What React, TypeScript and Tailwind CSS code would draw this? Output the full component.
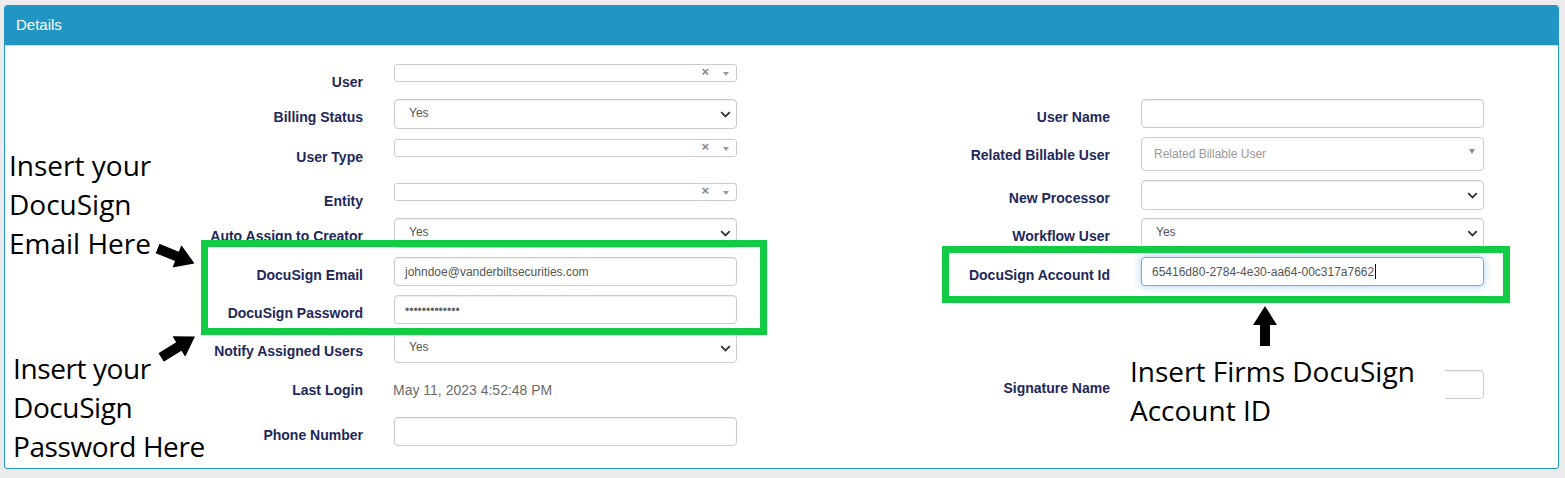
const labelCls =
  "text-right text-[14px] font-bold leading-5 pt-[8px] text-[#22275a] whitespace-nowrap";

function Chevron() {
  return (
    <svg width="11" height="7" viewBox="0 0 11 7" className="shrink-0">
      <path d="M1.2 1.2l4.3 4.3 4.3-4.3" fill="none" stroke="#333" strokeWidth="1.8" />
    </svg>
  );
}

function Select2Small() {
  return (
    <div className="relative h-[18px] border border-[#ccc] rounded-[3px] bg-white">
      <span className="absolute right-[27px] top-[-1px] text-[13px] font-bold text-[#888] leading-4">×</span>
      <span className="absolute right-[7px] top-[7px] w-0 h-0 border-l-[3px] border-r-[3px] border-t-[4px] border-l-transparent border-r-transparent border-t-[#999]" />
    </div>
  );
}

function SelectBox({ value }: { value?: string }) {
  return (
    <div className="h-[30px] border border-[#ccc] rounded-[4px] bg-white flex items-center justify-between pl-[14px] pr-[5px] shadow-[inset_0_1px_1px_rgba(0,0,0,0.075)]">
      <span className="text-[12px] text-[#555] -mt-[2px]">{value ?? ""}</span>
      <Chevron />
    </div>
  );
}

function TextInput({ value, focused, password }: { value?: string; focused?: boolean; password?: boolean }) {
  return (
    <div
      className={
        focused
          ? "h-[29px] border border-[#66afe9] rounded-[4px] bg-white flex items-center pl-[10px] shadow-[0_0_8px_rgba(102,175,233,0.6)]"
          : "h-[29px] border border-[#ccc] rounded-[4px] bg-white flex items-center pl-[10px] shadow-[inset_0_1px_1px_rgba(0,0,0,0.075)]"
      }
    >
      <span className={password ? "text-[12px] text-[#666] tracking-[0px]" : "text-[12px] text-[#555]"}>
        {value ?? ""}
      </span>
      {focused && <span className="w-px h-[15px] bg-black ml-px" />}
    </div>
  );
}

function RelatedSelect() {
  return (
    <div className="relative h-[34px] border border-[#ccc] rounded-[4px] bg-white flex items-center pl-[12px]">
      <span className="text-[12px] text-[#999]">Related Billable User</span>
      <span className="absolute right-[8px] top-[11px] w-0 h-0 border-l-[3px] border-r-[3px] border-t-[5px] border-l-transparent border-r-transparent border-t-[#888]" />
    </div>
  );
}

type Row = { label: string; h: string; control: React.ReactNode };

const leftRows: Row[] = [
  { label: "User", h: "h-[35px]", control: <Select2Small /> },
  { label: "Billing Status", h: "h-[40px]", control: <SelectBox value="Yes" /> },
  { label: "User Type", h: "h-[44px]", control: <Select2Small /> },
  { label: "Entity", h: "h-[35px]", control: <Select2Small /> },
  { label: "Auto Assign to Creator", h: "h-[39px]", control: <SelectBox value="Yes" /> },
  { label: "DocuSign Email", h: "h-[38px]", control: <TextInput value="johndoe@vanderbiltsecurities.com" /> },
  { label: "DocuSign Password", h: "h-[38px]", control: <TextInput value="•••••••••••••" password /> },
  { label: "Notify Assigned Users", h: "h-[39px]", control: <SelectBox value="Yes" /> },
  {
    label: "Last Login",
    h: "h-[45px]",
    control: <div className="text-[14px] text-[#6b6b6b] leading-5 pt-[8px] -ml-px">May 11, 2023 4:52:48 PM</div>,
  },
  { label: "Phone Number", h: "h-[29px]", control: <TextInput /> },
];

const rightRows: Row[] = [
  { label: "User Name", h: "h-[38px]", control: <TextInput /> },
  { label: "Related Billable User", h: "h-[43px]", control: <RelatedSelect /> },
  { label: "New Processor", h: "h-[38px]", control: <SelectBox /> },
  { label: "Workflow User", h: "h-[39px]", control: <SelectBox value="Yes" /> },
  {
    label: "DocuSign Account Id",
    h: "h-[113px]",
    control: <TextInput value="65416d80-2784-4e30-aa64-00c317a7662" focused />,
  },
  { label: "Signature Name", h: "h-[29px]", control: <TextInput /> },
];

function FormRow({ row, labelW }: { row: Row; labelW: string }) {
  return (
    <div className={`flex items-start ${row.h}`}>
      <div className={`${labelW} ${labelCls}`}>{row.label}</div>
      <div className="ml-[31px] w-[343px]">{row.control}</div>
    </div>
  );
}

function BlockArrow({ className }: { className: string }) {
  return (
    <svg width="40" height="24" viewBox="0 0 40 24" className={className}>
      <polygon points="0,7 21,7 21,0 40,12 21,24 21,17 0,17" fill="#000" />
    </svg>
  );
}

const noteCls =
  "absolute bg-white text-black text-[28px] leading-[39px] font-['Open_Sans','Noto_Sans',sans-serif]";

export default function App() {
  return (
    <div className="relative w-[1565px] h-[478px] bg-[#ececec] pt-[5px] pl-[4px] pr-[6px] font-['Liberation_Sans',Arial,sans-serif]">
      <div className="h-[464px] border border-[#2196c4] rounded-[3px] bg-white overflow-hidden">
        <div className="h-[40px] bg-[#2196c4] border-b border-[#ddd] flex items-center px-[11px]">
          <span className="text-white text-[15px] -mt-[1px]">Details</span>
        </div>
        <div className="flex">
          <div className="pt-[18px]">
            {leftRows.map((r) => (
              <FormRow key={r.label} row={r} labelW="w-[358px]" />
            ))}
          </div>
          <div className="pt-[53px] ml-[44px]">
            {rightRows.map((r) => (
              <FormRow key={r.label} row={r} labelW="w-[329px]" />
            ))}
          </div>
        </div>
      </div>

      {/* green highlight boxes */}
      <div className="absolute left-[201px] top-[240px] w-[566px] h-[95px] border-[7px] border-[#11cc44]" />
      <div className="absolute left-[942px] top-[246px] w-[568px] h-[57px] border-[7px] border-[#11cc44]" />

      {/* annotations */}
      <div className={`${noteCls} left-[9px] top-[146px]`}>
        Insert your
        <br />
        DocuSign
        <br />
        Email Here
      </div>
      <div className={`${noteCls} left-[13px] top-[349px] tracking-[-0.4px]`}>
        Insert your
        <br />
        DocuSign
        <br />
        Password Here
      </div>
      <div className={`${noteCls} left-[1125px] top-[352px] pl-[5px] pr-[30px] pb-[6px]`}>
        Insert Firms DocuSign
        <br />
        Account ID
      </div>

      <BlockArrow className="absolute left-[156px] top-[244px] rotate-[22deg]" />
      <BlockArrow className="absolute left-[158px] top-[335px] -rotate-[32deg]" />
      <BlockArrow className="absolute left-[1245px] top-[314px] -rotate-90" />
    </div>
  );
}
